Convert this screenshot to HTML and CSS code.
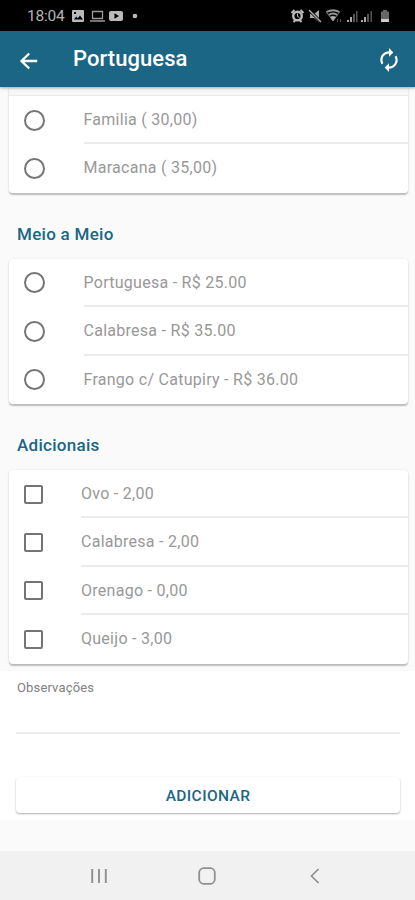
FILE: index.html
```html
<!DOCTYPE html>
<html lang="pt-BR">
<head>
<meta charset="utf-8">
<meta name="viewport" content="width=device-width, initial-scale=1">
<title>Portuguesa</title>
<link rel="stylesheet" href="styles.css">
</head>
<body>
<div class="screen">
  <div class="status">
    <span class="time">18:04</span>
    <svg class="status-left" width="70" height="14" viewBox="0 0 70 14" fill="#b9b9b9">
      <path fill-rule="evenodd" d="M2 1h10a1 1 0 0 1 1 1v10a1 1 0 0 1-1 1H2a1 1 0 0 1-1-1V2a1 1 0 0 1 1-1zM3 10.500h9L9 6.500l-2.200 2.800L5.200 7.500zM3 3v2h2V3z"/>
      <path fill="none" stroke="#999" stroke-width="1.300" d="M21.500 2.500h10v7h-10zM19 12h15"/>
      <path fill-rule="evenodd" d="M40 2h10a2 2 0 0 1 2 2v6a2 2 0 0 1-2 2H40a2 2 0 0 1-2-2V4a2 2 0 0 1 2-2zM43.500 4.300v5.400L48 7z"/>
      <circle cx="64" cy="7" r="2.300"/>
    </svg>
    <svg class="status-right" width="102" height="16" viewBox="0 0 102 16" fill="#aaa">
      <circle cx="7.500" cy="8" r="4.300" fill="none" stroke="#bbb" stroke-width="2.400"/>
      <path d="M7.500 5.500v3l2 1" fill="none" stroke="#bbb"/>
      <path d="M1.500 5l3-3M13.500 5l-3-3M3.500 14l2-2M11.500 14l-2-2" stroke="#bbb" stroke-width="2"/>
      <path d="M20 6h4l5-4v12l-5-4h-4z"/>
      <path d="M19 2l12 12" stroke="#000" stroke-width="3"/>
      <path d="M19 2l12 12" stroke="#aaa" stroke-width="1.500"/>
      <path d="M36.500 4q6.500-3.500 13 0M38.500 7q4.500-3 9 0" fill="none" stroke="#999" stroke-width="1.800"/>
      <path d="M36.500 4L43 13l6.500-9" fill="none" stroke="#777"/>
      <path d="M40 9q3-2 6 0l-3 4z"/>
      <path d="M47.500 14v-3M50.500 11v3" stroke="#555"/>
      <path d="M57 12h2v2h-2zM60 9h2v5h-2z"/>
      <path fill="#555" d="M63 6h2v8h-2zM66 3h1.500v11H66z"/>
      <path d="M71 12h2v2h-2zM74 9h2v5h-2z"/>
      <path fill="#555" d="M77 6h2v8h-2zM80.500 3H82v11h-1.500z"/>
      <path fill="#666" d="M93 2h4v1.500h2V11h-8V3.500h2z"/>
      <path fill="#ccc" d="M91 11h8v3h-8z"/>
    </svg>
  </div>
  <header class="appbar">
    <svg class="back" width="20" height="20" viewBox="0 0 20 20"><path d="M18.200 10H3M10.200 2.500L2.500 10l7.700 7.500" fill="none" stroke="#fff" stroke-width="2.300"/></svg>
    <h1>Portuguesa</h1>
    <svg class="refresh" width="26" height="26" viewBox="0 0 24 24" fill="#fff"><path d="M12 6v3l4-4-4-4v3c-4.420 0-8 3.580-8 8 0 1.570.46 3.030 1.240 4.260L6.700 14.800c-.45-.83-.7-1.790-.7-2.800 0-3.310 2.690-6 6-6zm6.760 1.740L17.300 9.200c.44.840.7 1.790.7 2.800 0 3.310-2.690 6-6 6v-3l-4 4 4 4v-3c4.420 0 8-3.580 8-8 0-1.570-.46-3.030-1.240-4.260z"/></svg>
  </header>
  <main>
    <section class="card first">
      <div class="row"><i class="radio"></i><span class="label">Familia ( 30,00)</span></div>
      <div class="row"><i class="radio"></i><span class="label">Maracana ( 35,00)</span></div>
    </section>
    <h2>Meio a Meio</h2>
    <section class="card">
      <div class="row"><i class="radio"></i><span class="label">Portuguesa - R$ 25.00</span></div>
      <div class="row"><i class="radio"></i><span class="label">Calabresa - R$ 35.00</span></div>
      <div class="row"><i class="radio"></i><span class="label">Frango c/ Catupiry - R$ 36.00</span></div>
    </section>
    <h2>Adicionais</h2>
    <section class="card checks">
      <div class="row"><i class="box"></i><span class="label">Ovo - 2,00</span></div>
      <div class="row"><i class="box"></i><span class="label">Calabresa - 2,00</span></div>
      <div class="row"><i class="box"></i><span class="label">Orenago - 0,00</span></div>
      <div class="row"><i class="box"></i><span class="label">Queijo - 3,00</span></div>
    </section>
    <section class="order">
      <div class="note">Observações</div>
      <button class="add">ADICIONAR</button>
    </section>
  </main>
  <nav>
    <svg width="18" height="18" viewBox="0 0 18 18"><path d="M2.200 2v14M9 2v14M15.800 2v14" stroke="#909090" stroke-width="1.900"/></svg>
    <svg width="18" height="18" viewBox="0 0 18 18"><rect x="1.200" y="1.200" width="15.600" height="15.600" rx="4.500" fill="none" stroke="#909090" stroke-width="1.800"/></svg>
    <svg width="18" height="18" viewBox="0 0 18 18"><path d="M12.500 2L5.500 9l7 7" fill="none" stroke="#909090" stroke-width="1.700"/></svg>
  </nav>
</div>
</body>
</html>
```
FILE: styles.css
```css
* { box-sizing: border-box; }
body { margin: 0; font-family: Roboto, "Liberation Sans", sans-serif; background: #fafafa; }
.screen { width: 415px; height: 900px; display: flex; flex-direction: column; overflow: hidden; }
.status { height: 31px; flex: none; background: #000; display: flex; align-items: center; padding: 0 23px 0 27px; }
.time { font-size: 15.500px; color: #b4b4b4; width: 38px; letter-spacing: -.2px; }
.status-left { margin-left: 6px; }
.status-right { margin-left: auto; }
.appbar { height: 56px; flex: none; background: #1b6685; display: flex; align-items: center; padding: 2px 13px 0 19px; box-shadow: 0 1px 3px rgba(0,0,0,.35); z-index: 1; }
.back { margin-top: 1px; }
h1 { margin: 0 0 3px 34px; font-size: 22px; font-weight: 500; line-height: 28px; color: #fff; letter-spacing: .05px; }
.refresh { margin-left: auto; }
main { flex: 1; display: flex; flex-direction: column; }
.card { margin: 0 7px 0 9px; background: #fff; border-radius: 4px; box-shadow: 0 1.500px 1.500px rgba(0,0,0,.24), 0 0 3px rgba(0,0,0,.06); flex: none; }
.row { height: 48.400px; display: flex; align-items: center; padding-left: 15px; }
.first { border-radius: 0 0 4px 4px; padding-top: 9px; background: linear-gradient(#f7f7f7 8px, #ebebeb 8px, #ebebeb 9px, #fff 9px); }
.radio { width: 21px; height: 21px; border: 2px solid #757575; border-radius: 50%; flex: none; }
.box { width: 19px; height: 19px; border: 2px solid #757575; border-radius: 2px; flex: none; }
.label { margin-left: 38.500px; flex: 1; height: 100%; border-bottom: 2px solid #ebebeb; font-size: 16px; line-height: 47px; color: #989898; letter-spacing: .27px; white-space: nowrap; }
.checks .label { margin-left: 38px; }
.row:last-child .label { border-bottom: 0; }
h2 { margin: 0; height: 66px; padding: 2px 17px 0; font-size: 17px; font-weight: 500; line-height: 79px; color: #1b6685; letter-spacing: .28px; flex: none; }
.order { margin-top: 7px; height: 149px; background: #fff; padding: 8px 15px 0 16px; flex: none; }
.note { height: 55px; padding-left: 1px; font-size: 13px; line-height: 18px; color: #808080; border-bottom: 2px solid #ebebeb; letter-spacing: .15px; }
.add { display: block; width: 100%; height: 36px; margin-top: 43px; border: 0; border-radius: 4px; background: #fff; box-shadow: 0 1px 2px rgba(0,0,0,.32); font: 500 15.500px/38px Roboto, sans-serif; letter-spacing: .4px; color: #1b6685; padding: 0; }
nav { height: 49px; flex: none; background: #f1f1f1; display: flex; justify-content: space-between; align-items: center; padding: 0 91px 0 90px; }
```
